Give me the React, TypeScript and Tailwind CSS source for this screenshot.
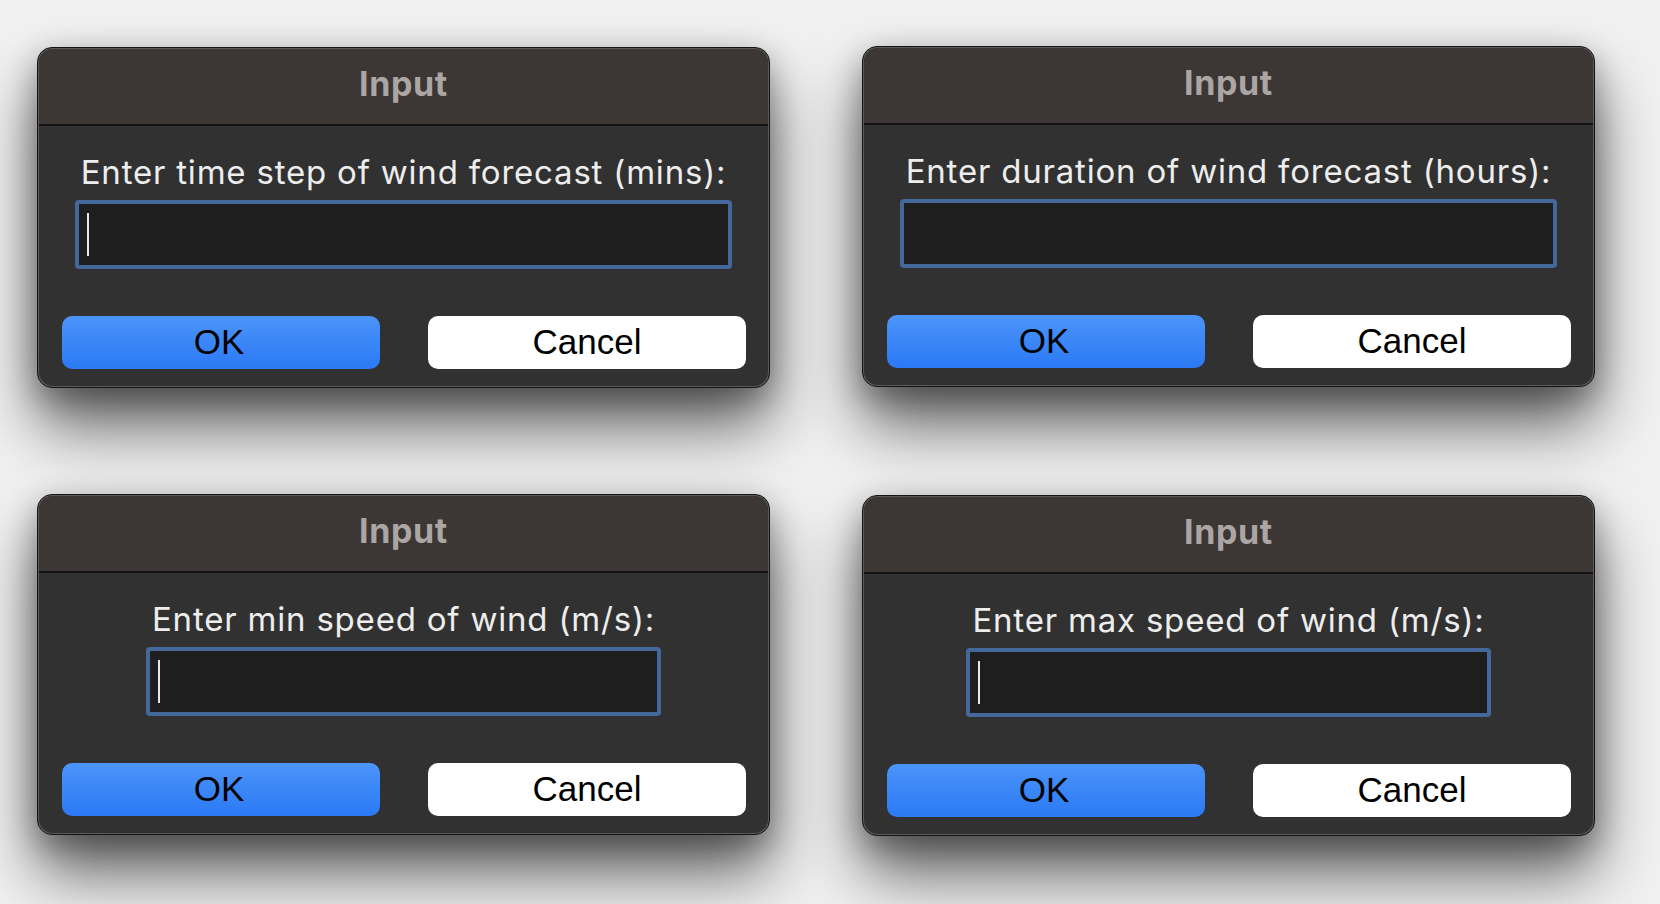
const sans = "font-['Inter','Noto_Sans',sans-serif]";

type DialogProps = {
  label: string;
  caret?: boolean;
  className?: string;
};

function InputDialog({ label, caret = true, className = "" }: DialogProps) {
  return (
    <div
      className={`w-[733px] h-[341px] rounded-[15px] border border-[#141414] bg-[#5a5a5a] p-px shadow-[0_38px_64px_rgba(0,0,0,0.6),0_10px_30px_rgba(0,0,0,0.3)] ${className}`}
    >
      <div className="flex h-full flex-col overflow-hidden rounded-[14px] bg-[#313131]">
        {/* title bar */}
        <div className="h-[75px] shrink-0 bg-[#3c3634] pt-[15px] text-center">
          <span
            className={`${sans} text-[34px] font-bold leading-[40px] tracking-[0.6px] text-[#aba6a3]`}
          >
            Input
          </span>
        </div>
        <div className="h-[2px] shrink-0 bg-[#121212]" />

        {/* body */}
        <div className="flex flex-1 flex-col pt-[26px]">
          <div className="flex justify-center">
            <div className="flex w-fit flex-col gap-[8px]">
              <p
                className={`${sans} whitespace-nowrap px-[6px] text-[33px] leading-[40px] tracking-[0.8px] text-[#ededed]`}
              >
                {label}
              </p>
              <div className="flex h-[69px] w-full items-center rounded-[4px] border-[4px] border-[#44689b] bg-[#1e1e1e] pl-[8px]">
                {caret && <span className="h-[43px] w-[2px] bg-[#e8e8e8]" />}
              </div>
            </div>
          </div>

          <div className="mt-[47px] flex gap-[48px] pl-[23px]">
            <button className="flex h-[53px] w-[318px] items-center justify-center rounded-[10px] bg-gradient-to-b from-[#4b94f9] to-[#2b79f5] pb-[2px] pr-[4px] font-['Liberation_Sans',Arial,sans-serif] text-[35px] leading-none text-black">
              OK
            </button>
            <button className="flex h-[53px] w-[318px] items-center justify-center rounded-[10px] bg-white pb-[2px] font-['Liberation_Sans',Arial,sans-serif] text-[35px] leading-none text-black">
              Cancel
            </button>
          </div>
        </div>
      </div>
    </div>
  );
}

export default function App() {
  return (
    <div className="h-[904px] w-[1660px] overflow-hidden bg-[#f1f1f1]">
      <div className="grid grid-cols-[733px_733px] gap-x-[92px] gap-y-[106px] pl-[37px] pt-[46px]">
        <InputDialog
          className="mt-px"
          label="Enter time step of wind forecast (mins):"
        />
        <InputDialog
          caret={false}
          label="Enter duration of wind forecast (hours):"
        />
        <InputDialog label="Enter min speed of wind (m/s):" />
        <InputDialog className="mt-px" label="Enter max speed of wind (m/s):" />
      </div>
    </div>
  );
}
